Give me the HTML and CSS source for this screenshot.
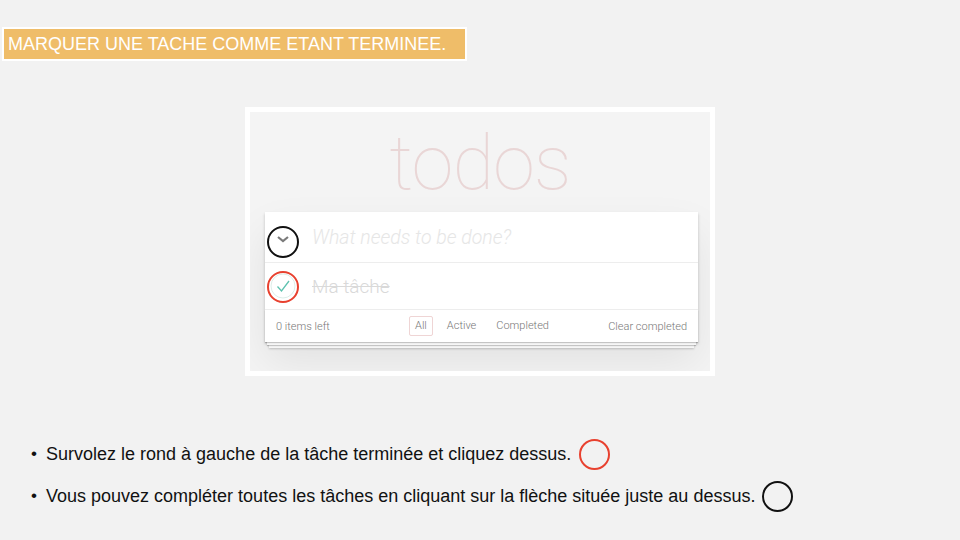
FILE: index.html
```html
<!DOCTYPE html>
<html lang="fr">
<head>
<meta charset="utf-8">
<title>Marquer une tâche</title>
<link rel="stylesheet" href="styles.css">
</head>
<body>
<div class="slide">
  <div class="title">MARQUER UNE TACHE COMME ETANT TERMINEE.</div>

  <div class="shot">
    <h1 class="logo">todos</h1>
    <div class="card">
      <div class="row input-row">
        <span class="toggle-all">
          <svg width="14" height="10" viewBox="0 0 14 10"><path d="M2 3 L7 7 L12 3" fill="none" stroke="#7a7a7a" stroke-width="2.2"/></svg>
        </span>
        <span class="placeholder">What needs to be done?</span>
        <span class="mark mark-black mark-toggle"></span>
      </div>
      <div class="row todo-row">
        <span class="check">
          <svg width="26" height="26" viewBox="0 0 26 26"><circle cx="13" cy="13" r="12" fill="none" stroke="#ddeee9" stroke-width="1"/><path d="M7.5 13.5 L11.5 18 L19 8" fill="none" stroke="#5dc2af" stroke-width="1.3"/></svg>
        </span>
        <span class="done">Ma tâche</span>
        <span class="mark mark-red mark-check"></span>
      </div>
      <div class="footer">
        <span class="count">0 items left</span>
        <ul class="filters">
          <li class="sel">All</li>
          <li>Active</li>
          <li>Completed</li>
        </ul>
        <span class="clear">Clear completed</span>
      </div>
    </div>
  </div>

  <ul class="bullets">
    <li><span class="dot">•</span>Survolez le rond à gauche de la tâche terminée et cliquez dessus.<span class="ring ring-red"></span></li>
    <li><span class="dot">•</span>Vous pouvez compléter toutes les tâches en cliquant sur la flèche située juste au dessus.<span class="ring ring-black"></span></li>
  </ul>
</div>
</body>
</html>
```
FILE: styles.css
```css
* { box-sizing: border-box; }
html, body { margin: 0; padding: 0; }
body { background: #f2f2f2; font-family: "Liberation Sans", Arial, sans-serif; }

.slide { width: 960px; height: 540px; position: relative; overflow: hidden; }

.title {
  display: inline-block;
  margin: 27px 0 0 2px;
  width: 465px;
  height: 34px;
  border: 2px solid #fff;
  background: #efbd69;
  color: #fff;
  font-size: 18px;
  line-height: 30px;
  padding-left: 4px;
  white-space: nowrap;
}

.shot {
  margin: 46px 0 0 245px;
  width: 470px;
  height: 269px;
  border: 5px solid #fff;
  background: #f4f4f4;
  overflow: hidden;
  font-family: Roboto, "Liberation Sans", sans-serif;
}

.logo {
  margin: 0;
  height: 100px;
  padding-top: 7px;
  text-align: center;
  font-size: 76px;
  font-weight: 100;
  line-height: 88px;
  color: rgba(175, 47, 47, 0.15);
  letter-spacing: -1px;
}

.card {
  position: relative;
  z-index: 0;
  margin-left: 15px;
  width: 433px;
  background: #fff;
  box-shadow: 0 2px 3px rgba(0,0,0,0.2), 0 20px 40px rgba(0,0,0,0.08);
}

.row {
  position: relative;
  display: flex;
  align-items: center;
  border-bottom: 1px solid #ededed;
}
.input-row { height: 51px; }
.todo-row { height: 47px; }

.toggle-all, .check {
  width: 47px;
  display: flex;
  justify-content: center;
  align-items: center;
}
.toggle-all { padding-top: 3px; padding-right: 12px; }
.check { padding-right: 12px; }

.placeholder {
  font-size: 19.5px;
  font-style: italic;
  font-weight: 300;
  color: #e6e6e6;
}
.done {
  font-size: 19px;
  font-weight: 300;
  color: #d9d9d9;
  text-decoration: line-through;
}

.mark {
  position: absolute;
  width: 32px;
  height: 32px;
  border-radius: 50%;
  border: 2px solid;
}
.mark-black { border-color: #111; }
.mark-red { border-color: #e8412f; }
.mark-toggle { left: 2px; top: 14px; }
.mark-check { left: 2px; top: 8px; }

.footer {
  position: relative;
  height: 32px;
  display: flex;
  align-items: center;
  padding: 0 11px;
  font-size: 11px;
  color: #777;
  font-weight: 300;
}
.footer::before {
  content: "";
  position: absolute;
  left: 0; right: 0; bottom: 0;
  height: 32px;
  z-index: -1;
  box-shadow: 0 1px 1px rgba(0,0,0,0.2), 0 5px 0 -2px #f6f6f6, 0 6px 1px -2px rgba(0,0,0,0.2), 0 10px 0 -4px #f6f6f6, 0 11px 2px -4px rgba(0,0,0,0.2);
}
.count { width: 133px; }
.filters {
  list-style: none;
  margin: 0;
  padding: 0;
  display: flex;
  gap: 8px;
}
.filters li {
  padding: 2px 5px;
  border: 1px solid transparent;
  border-radius: 2px;
  line-height: 14px;
}
.filters li.sel { border-color: rgba(175,47,47,0.2); }
.clear { margin-left: auto; }

.bullets {
  list-style: none;
  margin: 63px 0 0 0;
  padding: 0 0 0 31px;
  display: flex;
  flex-direction: column;
  gap: 12px;
  font-size: 18px;
  color: #111;
}
.bullets li {
  display: flex;
  align-items: center;
  height: 30px;
}
.dot { width: 15px; font-size: 17px; }
.ring {
  display: inline-block;
  width: 31px;
  height: 31px;
  border-radius: 50%;
  border: 2px solid;
  margin-left: 8px;
}
.ring-red { border-color: #e8412f; }
.ring-black { border-color: #111; margin-left: 7px; }
```
